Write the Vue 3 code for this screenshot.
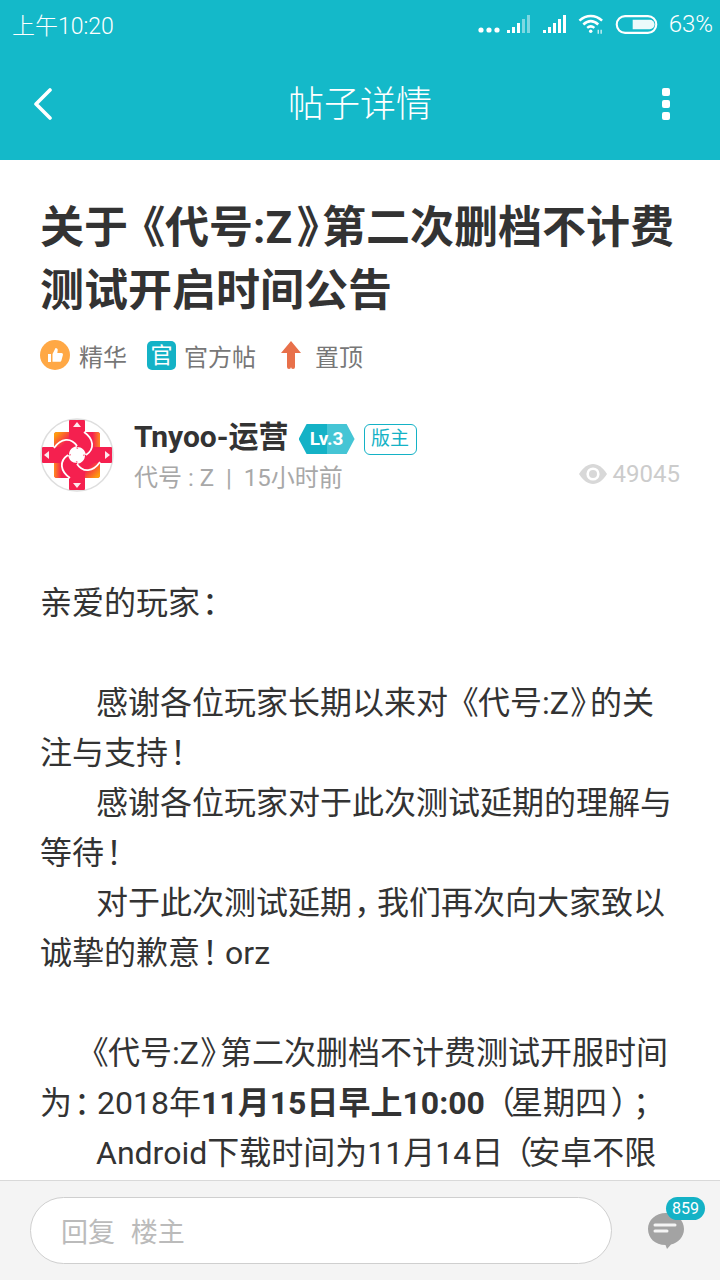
<script setup>
const topBars = [
  { x: 0, h: 3 }, { x: 5, h: 6 }, { x: 10, h: 10 }, { x: 15, h: 14 }, { x: 20, h: 18 }
]
const spins = [0, 90, 180, 270]
</script>

<template>
  <div class="page">
    <header class="head">
      <div class="status">
        <span class="clock">上午10:20</span>
        <div class="status-right">
          <svg class="dots" width="22" height="6" viewBox="0 0 22 6"><circle cx="3" cy="3" r="2.6"/><circle cx="11" cy="3" r="2.6"/><circle cx="19" cy="3" r="2.6"/></svg>
          <svg class="sig1" width="26" height="18" viewBox="0 0 26 18">
            <rect v-for="(b, i) in topBars" :key="i" :x="b.x" :y="18 - b.h" width="3" :height="b.h" :opacity="i > 2 ? 0.45 : 1"/>
          </svg>
          <svg class="sig2" width="26" height="18" viewBox="0 0 26 18">
            <rect v-for="(b, i) in topBars" :key="i" :x="b.x" :y="18 - b.h" width="3" :height="b.h"/>
          </svg>
          <svg class="wifi" width="27" height="22" viewBox="0 0 28 22" fill="none" stroke="#fff" stroke-width="2.6">
            <path d="M1.5 7.5C8.5 1 18 1 25 7.500"/>
            <path d="M5.500 11.500C10.500 7 16 7 21 11.500"/>
            <path d="M9.500 15C12 13 14.500 13 17 15"/>
            <circle cx="13.200" cy="18.600" r="1.800" fill="#fff" stroke="none"/>
            <path d="M21 21v-4M24 21v-4" stroke-width="1.400" opacity=".8"/>
          </svg>
          <svg class="batt" width="43" height="19" viewBox="0 0 44 20" fill="none">
            <rect x="1.200" y="1.200" width="41.600" height="17.600" rx="8.800" stroke="#fff" stroke-width="2.200"/>
            <path d="M18 5h18a5 5 0 0 1 0 10H18z" fill="#fff" opacity=".92"/>
          </svg>
          <span class="pct">63%</span>
        </div>
      </div>
      <div class="bar">
        <svg class="back" width="20" height="32" viewBox="0 0 20 32" fill="none" stroke="#fff" stroke-width="3.600" stroke-linecap="round" stroke-linejoin="round"><path d="M17 2 3 16l14 14"/></svg>
        <h1 class="bar-title">帖子详情</h1>
        <div class="more"><i></i><i></i><i></i></div>
      </div>
    </header>

    <main class="content">
      <h2 class="title">关于<span class="tl">《</span>代号:Z<span class="tr">》</span>第二次删档不计费<br>测试开启时间公告</h2>

      <div class="tags">
        <span class="tag">
          <svg width="30" height="30" viewBox="0 0 30 30"><circle cx="15" cy="15" r="15" fill="#ffa845"/><path d="M8 14h3v8H8zM12.500 14l3-6c1.600 0 2.500 1 2.200 2.600l-.4 2.400h4.200c1 0 1.700.9 1.400 1.900l-1.500 5.600c-.2.800-.9 1.300-1.700 1.300h-7.200z" fill="#fff"/></svg>
          <span>精华</span>
        </span>
        <span class="tag">
          <span class="guan">官</span>
          <span>官方帖</span>
        </span>
        <span class="tag tag-top">
          <svg width="20" height="28" viewBox="0 0 20 28"><path d="M10 0 20 12h-6v14a2 2 0 0 1-4 0 2 2 0 0 1-4 0V12H0z" fill="#e8704a"/></svg>
          <span>置顶</span>
        </span>
      </div>

      <div class="author">
        <svg class="avatar" width="74" height="74" viewBox="0 0 74 74">
          <defs>
            <linearGradient id="tlg" x1="0" y1="0" x2="1" y2="1">
              <stop offset="0" stop-color="#ffb800"/>
              <stop offset=".75" stop-color="#f5204f"/>
            </linearGradient>
            <linearGradient id="brg" x1="1" y1="1" x2="0" y2="0">
              <stop offset="0" stop-color="#ffb800"/>
              <stop offset=".75" stop-color="#f5204f"/>
            </linearGradient>
            <linearGradient id="trg" x1="1" y1="0" x2="0" y2="0">
              <stop offset="0" stop-color="#ff8a20"/>
              <stop offset=".5" stop-color="#f5204f"/>
            </linearGradient>
            <linearGradient id="blg" x1="0" y1="0" x2="1" y2="0">
              <stop offset="0" stop-color="#ff8a20"/>
              <stop offset=".5" stop-color="#f5204f"/>
            </linearGradient>
          </defs>
          <circle cx="37" cy="37" r="36" fill="#fff" stroke="#dedede" stroke-width="1.500"/>
          <path d="M29 3a1 1 0 0 1 1-1h14a1 1 0 0 1 1 1v11h12a3 3 0 0 1 3 3v12h11a1 1 0 0 1 1 1v14a1 1 0 0 1-1 1H60v12a3 3 0 0 1-3 3H45v11a1 1 0 0 1-1 1H30a1 1 0 0 1-1-1V60H17a3 3 0 0 1-3-3V45H3a1 1 0 0 1-1-1V30a1 1 0 0 1 1-1h11V17a3 3 0 0 1 3-3h12z" fill="#f5204f"/>
          <path d="M17 14h12v15H14V17a3 3 0 0 1 3-3z" fill="url(#tlg)"/>
          <path d="M57 60H45V45h15v12a3 3 0 0 1-3 3z" fill="url(#brg)"/>
          <path d="M45 14h12a3 3 0 0 1 3 3v12H45z" fill="url(#trg)"/>
          <path d="M14 45h15v15H17a3 3 0 0 1-3-3z" fill="url(#blg)"/>
          <g v-for="a in spins" :key="a" :transform="`rotate(${a} 37 37)`">
            <path d="M44 14C54 21 55 31 46 37" fill="none" stroke="#fff" stroke-width="1.800"/>
            <path d="M37 29c5 0 8 3 9 8l-6-1c0-2-1-4-3-7z" fill="#fff"/>
          </g>
          <circle cx="37" cy="37" r="6.500" fill="#fff"/>
          <path d="M37 4l4 5h-8zM37 70l-4-5h8zM4 37l5-4v8zM70 37l-5-4v8z" fill="#fff" opacity=".9"/>
        </svg>
        <div class="who">
          <div class="name-row">
            <span class="name">Tnyoo-运营</span>
            <span class="lv">Lv.3</span>
            <span class="role">版主</span>
          </div>
          <div class="sub-row">
            <span class="meta">代号 : Z&nbsp;&nbsp;|&nbsp;&nbsp;15小时前</span>
            <span class="views">
              <svg width="28" height="20" viewBox="0 0 28 20"><path d="M0 10C4 3.500 9 0 14 0s10 3.500 14 10c-4 6.500-9 10-14 10S4 16.500 0 10z" fill="#d8d8d8"/><circle cx="14" cy="10" r="6.600" fill="#fff"/><circle cx="14" cy="10" r="4" fill="#d8d8d8"/></svg>
              <span>49045</span>
            </span>
          </div>
        </div>
      </div>

      <article class="body">
        <p>亲爱的玩家<span class="pc">：</span></p>
        <p class="blank"></p>
        <p class="ind">感谢各位玩家长期以来对<span class="bl">《</span>代号:Z<span class="br">》</span>的关注与支持<span class="pc">！</span></p>
        <p class="ind">感谢各位玩家对于此次测试延期的理解与等待<span class="pc">！</span></p>
        <p class="ind">对于此次测试延期<span class="pc">，</span>我们再次向大家致以诚挚的歉意<span class="pc">！</span>orz</p>
        <p class="blank"></p>
        <p class="ind2"><span class="bl">《</span>代号:Z<span class="br">》</span>第二次删档不计费测试开服时间为<span class="pc">：</span>2018年<b>11月15日早上10:00</b><span class="pa">（</span>星期四<span class="pz">）</span><span class="pc">；</span></p>
        <p class="ind">Android下载时间为11月14日<span class="pb">（</span>安卓不限</p>
      </article>
    </main>

    <footer class="foot">
      <div class="reply">回复 楼主</div>
      <div class="cmt">
        <svg width="38" height="36" viewBox="0 0 38 36"><path d="M19 0c10.500 0 18 7 18 16 0 8-6 14-13 15.500L20 36l-1.500-4C8 32 1 25 1 16 1 7 8.500 0 19 0z" fill="#a3a3a3"/><path d="M8 12h20M8 18h12" stroke="#f4f4f4" stroke-width="3" stroke-linecap="round"/></svg>
        <span class="badge">859</span>
      </div>
    </footer>
  </div>
</template>

<style scoped>
.page {
  width: 720px;
  height: 1280px;
  display: flex;
  flex-direction: column;
  overflow: hidden;
  background: #fff;
  font-family: Roboto, "Noto Sans CJK SC", sans-serif;
  color: #333;
}
.head { background: #14b9c9; color: #fff; flex: none; }
.status {
  height: 50px;
  box-sizing: border-box;
  display: flex;
  align-items: center;
  justify-content: space-between;
  padding: 0 7px 2px 12px;
}
.clock { font-size: 23px; font-weight: 300; }
.status-right { display: flex; align-items: center; }
.status-right svg { fill: #fff; }
.dots { margin-right: 7px; margin-top: 12px; }
.sig1 { margin-right: 10px; }
.sig2 { margin-right: 9px; }
.wifi { margin-right: 10px; fill: none !important; }
.batt { margin-right: 11px; fill: none !important; }
.pct { font-size: 24px; font-weight: 300; }
.bar {
  height: 110px;
  box-sizing: border-box;
  display: flex;
  align-items: center;
  justify-content: space-between;
  padding: 0 50px 2px 33px;
}
.bar-title { margin: 2px 0 0 5px; font-size: 36px; font-weight: 300; line-height: 1; }
.more { display: flex; flex-direction: column; gap: 4px; }
.more i { display: block; width: 8px; height: 8px; background: #fff; border-radius: 2px; }
.content { flex: 1; min-height: 0; overflow: hidden; padding: 0 41px; }
.title {
  margin: 37px 0 0 -1px;
  font-size: 44px;
  line-height: 63px;
  font-weight: 700;
  color: #333;
  white-space: nowrap;
}
.tl { font-feature-settings: "palt"; margin-left: 15px; }
.tr { font-feature-settings: "palt"; margin: 0 3px 0 5px; }
.tags {
  display: flex;
  align-items: center;
  gap: 21px;
  margin-top: 17px;
  height: 30px;
  font-size: 24px;
  color: #777;
}
.tag { display: flex; align-items: center; gap: 9px; margin-left: -1px; }
.tag-top { gap: 14px; margin-left: 4px; }
.guan {
  width: 29px;
  height: 29px;
  margin-right: -1px;
  background: #14b2c6;
  border-radius: 5px;
  color: #fff;
  font-size: 22px;
  line-height: 29px;
  text-align: center;
}
.author { display: flex; align-items: center; gap: 20px; margin-top: 46px; margin-left: -1px; }
.avatar { flex: none; }
.who { flex: 1; margin-top: 5px; }
.name-row { display: flex; align-items: center; height: 36px; }
.name { font-size: 30px; font-weight: 700; color: #333; margin-bottom: 10px; }
.lv {
  margin-left: 10px;
  width: 56px;
  height: 30px;
  line-height: 30px;
  text-align: center;
  color: #fff;
  font-size: 19px;
  font-weight: 700;
  background: linear-gradient(90deg, #14b2c6 50%, #45c5d5 50%);
  clip-path: polygon(8px 0, 48px 0, 56px 50%, 48px 100%, 8px 100%, 0 50%);
}
.role {
  margin-left: 9px;
  width: 53px;
  height: 31px;
  box-sizing: border-box;
  border: 1.500px solid #14b2c6;
  border-radius: 6px;
  color: #14b2c6;
  font-size: 19px;
  line-height: 28px;
  text-align: center;
}
.sub-row { display: flex; align-items: flex-start; justify-content: space-between; margin-top: 5px; }
.meta { font-size: 24px; color: #a8a8a8; line-height: 32px; }
.views { display: flex; align-items: center; gap: 6px; font-size: 24px; color: #ccc; height: 24px; margin-right: -1px; }
.body { margin: 84px 0 0 -1px; font-size: 32px; line-height: 50px; color: #333; }
.body p { margin: 0; }
.blank { height: 50px; }
.ind { text-indent: 56px; }
.ind2 { text-indent: 38px; }
.pc { font-feature-settings: "halt"; margin: 0 7px 0 2px; }
.bl { font-feature-settings: "palt"; margin-left: 14px; }
.br { font-feature-settings: "palt"; margin: 0 3px 0 2px; }
.pa { font-feature-settings: "palt"; margin: 0 -3px 0 13px; }
.pz { font-feature-settings: "palt"; margin: 0 3px 0 5px; }
.pb { font-feature-settings: "palt"; margin: 0 -3px 0 12px; }
.body b { font-weight: 700; }
.foot {
  flex: none;
  height: 100px;
  box-sizing: border-box;
  border-top: 1.500px solid #d9d9d9;
  background: #f4f4f4;
  display: flex;
  align-items: center;
  padding: 0 16px 0 30px;
}
.reply {
  width: 582px;
  height: 67px;
  box-sizing: border-box;
  border: 1.500px solid #cfcfcf;
  border-radius: 34px;
  background: #fff;
  color: #bbb;
  font-size: 27px;
  line-height: 66px;
  padding: 2px 0 0 30px;
  word-spacing: 9px;
}
.cmt { position: relative; margin-left: 35px; display: flex; }
.badge {
  position: absolute;
  left: 19px;
  top: -16px;
  width: 39px;
  height: 23px;
  background: #14b2c6;
  color: #fff;
  border-radius: 12px;
  font-size: 16px;
  line-height: 23px;
  text-align: center;
}
</style>

<style>
html, body { margin: 0; background: #fff; }
</style>
